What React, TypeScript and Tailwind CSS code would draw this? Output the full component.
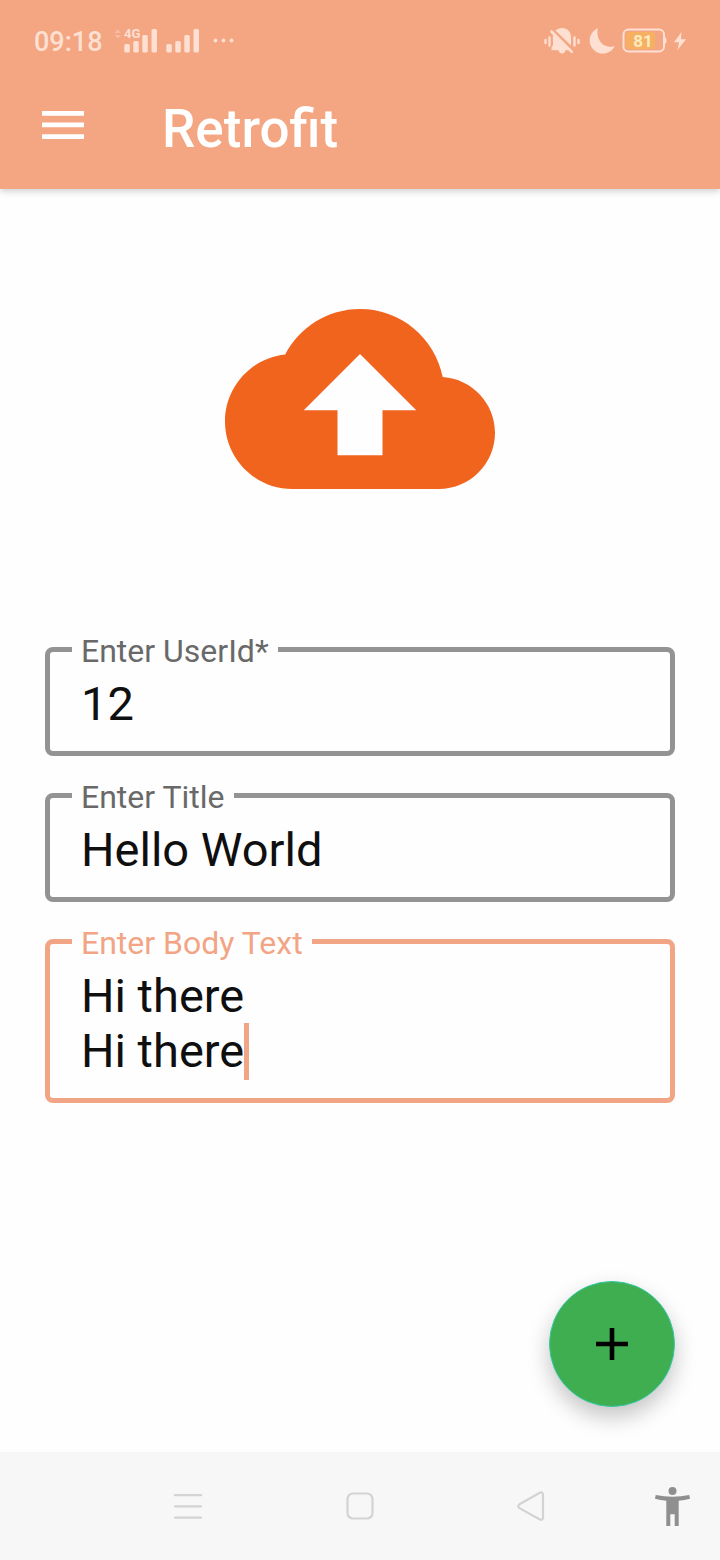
import React from "react";

function CellSignal() {
  return (
    <svg className="block h-[38px] w-[88px]" viewBox="0 -6 88 38" fill="currentColor" aria-hidden="true">
      <path d="M1.500 5 4.700 1.200 8 5zM1.500 7l3.200 3.500L8 7z" opacity="0.4" />
      <text x="11" y="10" fontSize="13" fontWeight="700" fontFamily="Roboto, sans-serif">4G</text>
      <rect x="11.300" y="16" width="5.500" height="8.500" rx="1.500" />
      <rect x="20.300" y="13" width="5.500" height="11.500" rx="1.500" />
      <rect x="29.300" y="7" width="5.500" height="17.500" rx="1.500" />
      <rect x="38.500" y="1" width="5.500" height="23.500" rx="1.500" />
      <rect x="53.300" y="16" width="5.500" height="8.500" rx="1.500" />
      <rect x="62.300" y="13" width="5.500" height="11.500" rx="1.500" />
      <rect x="71.300" y="7" width="5.500" height="17.500" rx="1.500" />
      <rect x="80.500" y="1" width="5.500" height="23.500" rx="1.500" />
    </svg>
  );
}

function MoreDots() {
  return (
    <svg className="block h-[26px] w-[22px]" viewBox="0 0 22 26" fill="currentColor" aria-hidden="true">
      <circle cx="2.500" cy="12.500" r="1.900" />
      <circle cx="10.500" cy="12.500" r="1.900" />
      <circle cx="18.500" cy="12.500" r="1.900" />
    </svg>
  );
}

function SilentBell() {
  return (
    <svg className="block h-[28px] w-[36px]" viewBox="0 0 36 28" fill="currentColor" aria-hidden="true">
      <path d="M11.500 3.600C13.200 2 15.300 1 18 1c5.500 0 9 4 9 9v8.500z" />
      <path d="M8.800 7.200 24.800 23.200H21.500C20.800 25.400 19.700 26.500 18 26.500s-2.800-1.100-3.500-3.300H7.500v-3L9 18z" />
      <path d="M7.500 4.500 27.800 24.800" stroke="currentColor" strokeWidth="2.600" strokeLinecap="round" />
      <path d="M1.500 13v3M5.500 10.500v8M30.500 10.500v8M34.500 13v3" stroke="currentColor" strokeWidth="2.400" strokeLinecap="round" />
    </svg>
  );
}

function Moon() {
  return (
    <svg className="block h-[28px] w-[28px]" viewBox="0 0 28 28" fill="currentColor" aria-hidden="true">
      <path d="M9.800 1.200A13.200 13.200 0 1 0 26.800 19C18 22.500 7.200 15 9.800 1.200z" />
    </svg>
  );
}

function Battery() {
  return (
    <svg className="block h-[26px] w-[46px]" viewBox="0 0 46 26" role="img" aria-label="Battery 81 percent">
      <rect x="4" y="4" width="29" height="17" rx="3" fill="#f7b061" />
      <rect x="1.500" y="1.500" width="40.500" height="22" rx="5" fill="none" stroke="#fde0d2" strokeWidth="2" />
      <path d="M43 9c2 1 2 6 0 7z" fill="#fde0d2" />
      <text x="21" y="18.500" textAnchor="middle" fontSize="17" fontWeight="700" fontFamily="Roboto, sans-serif" fill="#fdebc0">81</text>
    </svg>
  );
}

function Bolt() {
  return (
    <svg className="block h-[20px] w-[14px]" viewBox="0 0 14 20" fill="currentColor" aria-hidden="true">
      <path d="M8.500 1 1 11.200h5L4.500 19 13 8.200H8z" />
    </svg>
  );
}

function StatusBar() {
  return (
    <div className="flex h-20 items-center justify-between pt-[2px] pr-[33px] pl-[34px] text-[#fde0d2]">
      <div className="flex items-center">
        <span className="mr-2.5 pt-[2px] text-[27px] leading-8 font-medium">09:18</span>
        <CellSignal />
        <span className="ml-3">
          <MoreDots />
        </span>
      </div>
      <div className="flex items-center">
        <SilentBell />
        <span className="ml-2">
          <Moon />
        </span>
        <span className="ml-[6px]">
          <Battery />
        </span>
        <span className="ml-[5px]">
          <Bolt />
        </span>
      </div>
    </div>
  );
}

type FieldProps = {
  id: string;
  label: string;
  active?: boolean;
  children: React.ReactNode;
};

function OutlinedField({ id, label, active = false, children }: FieldProps) {
  return (
    <fieldset
      className={`min-w-0 rounded-lg border-[5px] px-[22px] pb-5 ${
        active ? "border-[#f2a585]" : "border-[#939393]"
      }`}
    >
      <legend className="px-[9px]">
        <label
          htmlFor={id}
          className={`block pt-1 text-[32px] leading-[31px] ${active ? "text-[#f2a585]" : "text-[#696969]"}`}
        >
          {label}
        </label>
      </legend>
      <div className="relative px-[9px] pt-[9px]">{children}</div>
    </fieldset>
  );
}

const controlClass =
  "block w-full resize-none overflow-hidden bg-transparent text-[47px] leading-[55px] text-[#0f0f0f] outline-none";

export default function App() {
  return (
    <div className="flex min-h-screen flex-col bg-[#fefefe] font-['Roboto',sans-serif]">
      <header className="bg-[#f4a582] pb-[11px] shadow-[0_2px_7px_rgba(0,0,0,0.2)]">
        <StatusBar />
        <div className="flex h-[98px] items-center gap-[78px] pl-[42px]">
          <button type="button" aria-label="Open menu" className="text-white">
            <svg className="block h-[36px] w-[42px]" viewBox="0 0 42 36" fill="currentColor" aria-hidden="true">
              <path d="M0 0h42v4.700H0zM0 11.600h42v4.700H0zM0 23.300h42V28H0z" />
            </svg>
          </button>
          <h1 className="text-[53px] leading-[60px] font-medium text-white">Retrofit</h1>
        </div>
      </header>

      <main className="flex flex-1 flex-col px-[45px] pt-[75px] pb-[45px]">
        <svg className="h-[270px] w-[270px] self-center" viewBox="0 0 24 24" fill="#f1641e" aria-hidden="true">
          <path d="M19.350 10.040C18.670 6.590 15.640 4 12 4 9.110 4 6.600 5.640 5.350 8.040 2.340 8.360 0 10.910 0 14c0 3.310 2.690 6 6 6h13c2.760 0 5-2.240 5-5 0-2.640-2.050-4.780-4.650-4.960zM14 13v4h-4v-4H7l5-5 5 5h-3z" />
        </svg>

        <form className="mt-[98px] flex flex-col gap-[22px]">
          <OutlinedField id="user-id" label="Enter UserId*">
            <input id="user-id" type="text" inputMode="numeric" defaultValue="12" className={`${controlClass} h-[55px]`} />
          </OutlinedField>
          <OutlinedField id="title" label="Enter Title">
            <input id="title" type="text" defaultValue="Hello World" className={`${controlClass} h-[55px]`} />
          </OutlinedField>
          <OutlinedField id="body-text" label="Enter Body Text" active>
            <textarea id="body-text" rows={2} defaultValue={"Hi there\nHi there"} className={controlClass} />
            <span className="absolute -bottom-[2px] left-[172px] h-[57px] w-[5px] bg-[#f2a585]" aria-hidden="true" />
          </OutlinedField>
        </form>

        <button
          type="button"
          aria-label="Add"
          className="mt-auto flex h-[126px] w-[126px] items-center justify-center self-end rounded-full border border-[#36c9a8] bg-[#3eae50] text-black shadow-[0_10px_22px_rgba(0,0,0,0.23)]"
        >
          <svg className="h-8 w-8" viewBox="0 0 32 32" fill="currentColor" aria-hidden="true">
            <path d="M13.700 0h4.600v13.700H32v4.600H18.300V32h-4.600V18.300H0v-4.600h13.700z" />
          </svg>
        </button>
      </main>

      <nav aria-label="System navigation" className="flex h-[108px] items-center bg-[#f7f7f7] text-[#d3d3d3]">
        <div className="w-[102px]" />
        <div className="flex flex-1 justify-center">
          <button type="button" aria-label="Recent apps">
            <svg className="block h-[30px] w-[30px]" viewBox="0 0 30 30" stroke="currentColor" strokeWidth="2.300" strokeLinecap="round" aria-hidden="true">
              <path d="M2 4.200h26M2 15.400h26M2 26.600h26" />
            </svg>
          </button>
        </div>
        <div className="flex flex-1 justify-center">
          <button type="button" aria-label="Home">
            <svg className="block h-[30px] w-[30px]" viewBox="0 0 30 30" fill="none" stroke="currentColor" strokeWidth="2.200" aria-hidden="true">
              <rect x="2.500" y="2.500" width="25" height="25" rx="5.500" />
            </svg>
          </button>
        </div>
        <div className="flex flex-1 justify-center">
          <button type="button" aria-label="Back">
            <svg className="block h-[30px] w-[30px]" viewBox="-1 0 30 30" fill="none" stroke="currentColor" strokeWidth="2.200" aria-hidden="true">
              <path d="M21.800 1.800 1.500 13.200Q-1 15.200 1.500 17.200L21.800 28.400Q25 29.600 25 26.400V3.800Q25 .6 21.800 1.800z" />
            </svg>
          </button>
        </div>
        <div className="flex w-[102px] justify-end pr-[30px]">
          <button type="button" aria-label="Accessibility" className="text-[#8f8f8f]">
            <svg className="block h-[40px] w-[36px]" viewBox="0 0 36 40" fill="currentColor" aria-hidden="true">
              <circle cx="18.500" cy="5" r="4" />
              <path d="M1.700 9Q18.500 12.600 35.300 9L36 12.800Q30.500 14.200 24.700 14.800V40H20.700V28.200H16.300V40H12.300V14.800Q6.500 14.200 1 12.800z" />
            </svg>
          </button>
        </div>
      </nav>
    </div>
  );
}
